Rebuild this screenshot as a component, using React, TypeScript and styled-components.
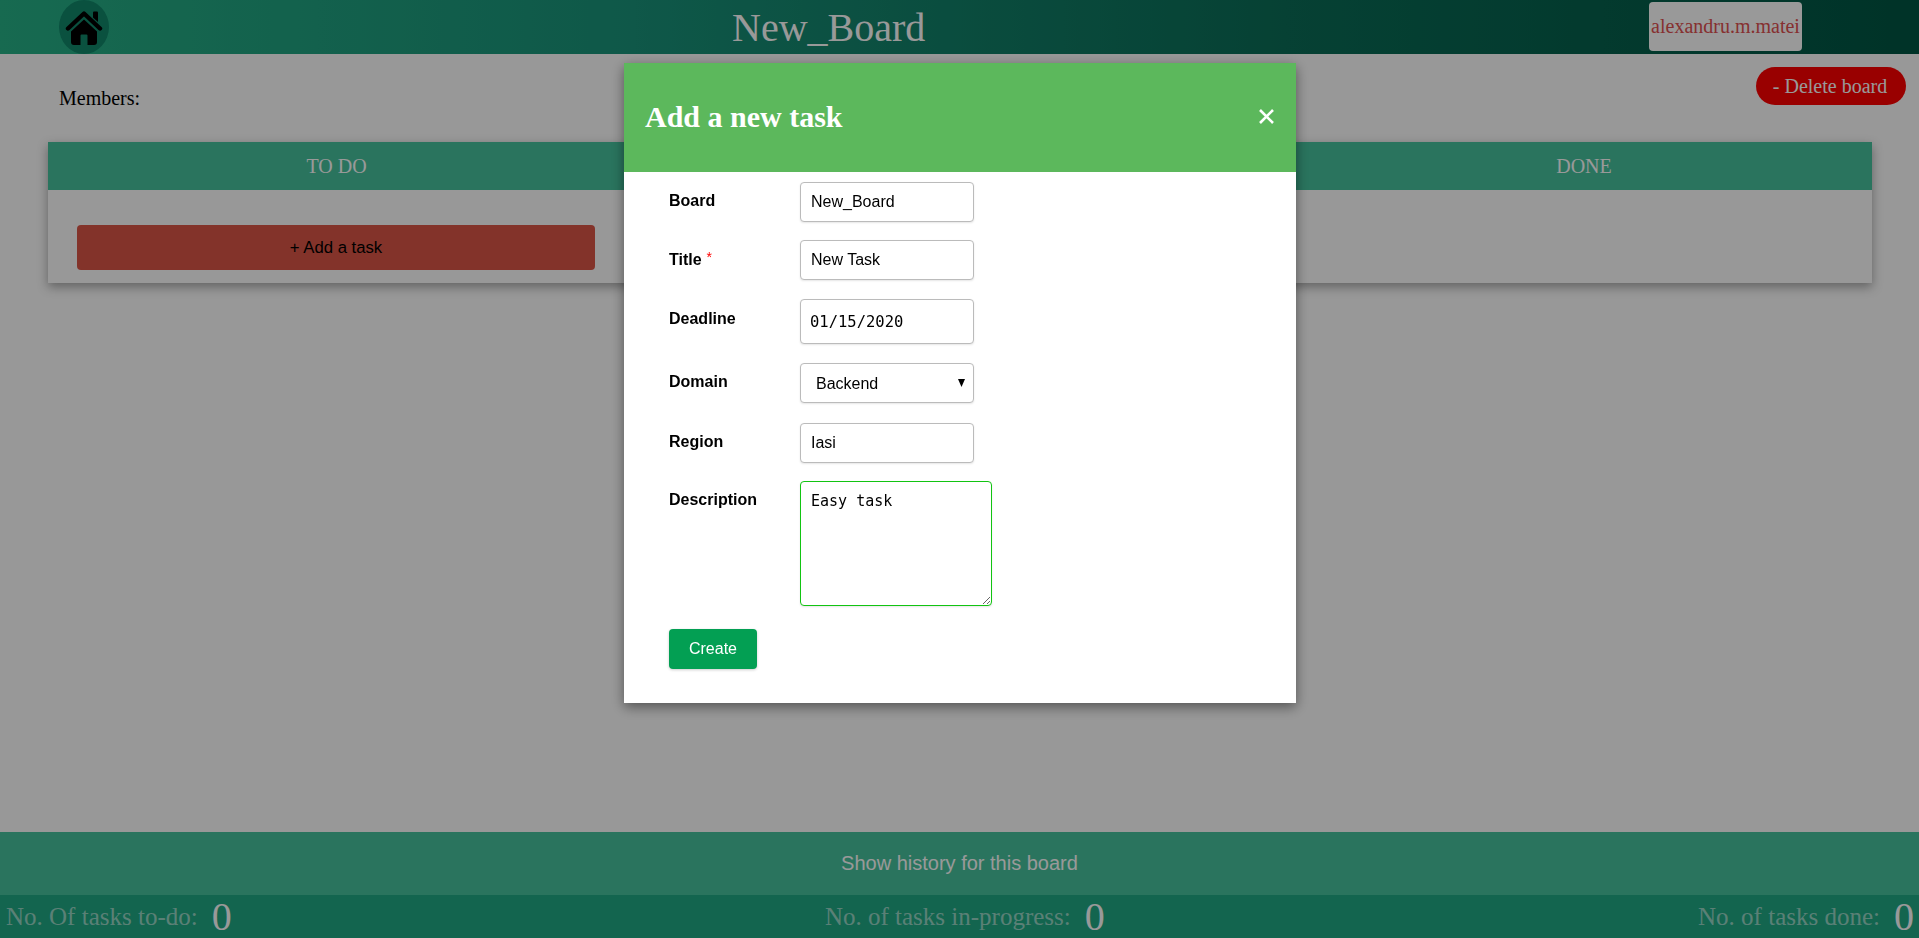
import React from "react";
import styled, { createGlobalStyle } from "styled-components";

const GlobalStyle = createGlobalStyle`
  html, body {
    margin: 0;
    padding: 0;
    background: #fff;
  }
  * {
    box-sizing: border-box;
  }
`;

/* Page */
/* ************************************************************************** */
const Page = styled.div`
  display: flex;
  flex-direction: column;
  height: 100vh;
  overflow: hidden;
  font-family: "Liberation Serif", serif;
  background: #fdfdfd;
`;

const Header = styled.header`
  flex: none;
  display: grid;
  grid-template-columns: 732px 1fr auto;
  align-items: center;
  height: 54px;
  padding-right: 117px;
  background: linear-gradient(to right, #27b186 0%, #19937a 33%, #0a6d57 67%, #005543 100%);
`;

const HomeCell = styled.div`
  padding-left: 59px;
`;

const HomeLink = styled.a`
  display: flex;
  align-items: center;
  justify-content: center;
  width: 50px;
  height: 54px;
  border-radius: 50%;
  background: #11876a;
  color: #000;
`;

const HomeIcon = styled.svg`
  width: 38px;
  height: 36px;
  fill: #000;
`;

const BoardTitle = styled.h1`
  margin: 0;
  font-size: 40px;
  font-weight: 400;
  color: #fff;
`;

const UserButton = styled.button`
  width: 153px;
  height: 49px;
  margin-bottom: 1px;
  padding: 0;
  border: 0;
  border-radius: 4px;
  background: #fff;
  color: #e05050;
  font-family: inherit;
  font-size: 20px;
`;

const Toolbar = styled.div`
  flex: none;
  display: flex;
  justify-content: space-between;
  height: 88px;
  padding: 13px 13px 0 59px;
`;

const Members = styled.div`
  padding-top: 20px;
  font-size: 20px;
  color: #000;
`;

const DeleteButton = styled.button`
  width: 150px;
  height: 38px;
  padding: 0 2px 0 0;
  border: 0;
  border-radius: 19px;
  background: #f00;
  color: #fff;
  font-family: inherit;
  font-size: 20px;
`;

const Columns = styled.section`
  flex: none;
  display: grid;
  grid-template-columns: 577px 1fr 576px;
  height: 141px;
  margin: 0 47px 0 48px;
  box-shadow: 0 4px 10px rgba(0, 0, 0, 0.35);
`;

const Column = styled.div`
  display: flex;
  flex-direction: column;
`;

const ColumnTitle = styled.div`
  display: flex;
  align-items: center;
  justify-content: center;
  height: 48px;
  background: #46c29d;
  color: #fff;
  font-size: 20px;
`;

const ColumnBody = styled.div`
  padding: 35px 30px 0 29px;
`;

const AddTask = styled.button`
  display: block;
  width: 100%;
  height: 45px;
  border: 0;
  border-radius: 4px;
  background: #da5546;
  color: #000;
  font-family: "Liberation Sans", sans-serif;
  font-size: 16.7px;
`;

const Spacer = styled.div`
  flex: 1;
`;

const HistoryButton = styled.button`
  flex: none;
  height: 63px;
  border: 0;
  background: #46c29d;
  color: #fff;
  font-family: "Liberation Sans", sans-serif;
  font-size: 20px;
`;

const Totals = styled.footer`
  flex: none;
  display: flex;
  justify-content: space-between;
  align-items: center;
  height: 43px;
  padding: 0 5px 0 6px;
  background: #20a884;
`;

const Total = styled.div`
  display: flex;
  align-items: center;
  gap: 14px;
`;

const TotalLabel = styled.span`
  font-size: 25px;
  color: rgba(255, 255, 255, 0.55);
`;

const TotalValue = styled.span`
  font-size: 40px;
  line-height: 43px;
  color: #fff;
`;

/* Modal */
/* ************************************************************************** */
const Backdrop = styled.div`
  position: fixed;
  inset: 0;
  background: rgba(0, 0, 0, 0.4);
`;

const Modal = styled.div`
  position: absolute;
  top: 63px;
  left: 624px;
  width: 672px;
  height: 640px;
  background: #fff;
  box-shadow: 0 4px 12px rgba(0, 0, 0, 0.45);
`;

const ModalHeader = styled.div`
  display: flex;
  align-items: center;
  justify-content: space-between;
  height: 109px;
  padding: 0 21px 2px;
  background: #5cb85c;
  color: #fff;
`;

const ModalTitle = styled.h2`
  margin: 0;
  font-size: 30px;
  font-weight: 700;
`;

const CloseIcon = styled.svg`
  width: 17px;
  height: 15px;
  stroke: #fff;
  stroke-width: 2.6;
`;

const Form = styled.form`
  display: flex;
  flex-direction: column;
  align-items: flex-start;
  padding: 10px 45px 0;
  font-family: "Liberation Sans", sans-serif;
`;

const Row = styled.div<{ $gap: number }>`
  display: grid;
  grid-template-columns: 131px auto;
  margin-bottom: ${(p) => p.$gap}px;
`;

const Label = styled.label<{ $top?: number }>`
  padding-top: ${(p) => p.$top ?? 10}px;
  font-size: 16px;
  line-height: 18px;
  font-weight: 700;
  color: #000;
`;

const Required = styled.span`
  position: relative;
  top: -3px;
  margin-left: 5px;
  font-size: 14px;
  font-weight: 400;
  color: #f00;
`;

const Input = styled.input<{ $height?: number }>`
  display: block;
  width: 174px;
  height: ${(p) => p.$height ?? 40}px;
  padding: 0 10px;
  border: 1px solid #bbb;
  border-radius: 4px;
  background: #fff;
  color: #000;
  font-family: "Liberation Sans", sans-serif;
  font-size: 16px;
  box-shadow: 0 1px 2px rgba(0, 0, 0, 0.1);
  outline: none;
`;

const DateInput = styled(Input)`
  padding: 0 9px;
  font-family: "DejaVu Sans Mono", monospace;
  font-size: 15.5px;
`;

const SelectWrap = styled.div`
  position: relative;
  width: 174px;
`;

const Select = styled.select`
  display: block;
  width: 100%;
  height: 40px;
  padding: 0 0 0 15px;
  appearance: none;
  border: 1px solid #bbb;
  border-radius: 4px;
  background: #fff;
  color: #000;
  font-family: "Liberation Sans", sans-serif;
  font-size: 16px;
  box-shadow: 0 1px 2px rgba(0, 0, 0, 0.1);
  outline: none;
`;

const SelectArrow = styled.svg`
  position: absolute;
  top: 16px;
  right: 9px;
  width: 7px;
  height: 8px;
  pointer-events: none;
`;

const Description = styled.textarea`
  display: block;
  width: 192px;
  height: 125px;
  padding: 10px 10px;
  border: 1px solid #12c412;
  border-radius: 4px;
  color: #000;
  font-family: "DejaVu Sans Mono", monospace;
  font-size: 15px;
  line-height: 18px;
  box-shadow: 0 1px 2px rgba(0, 0, 0, 0.1);
  outline: none;
`;

const CreateButton = styled.button`
  width: 88px;
  height: 40px;
  padding: 0;
  border: 0;
  border-radius: 4px;
  background: #039f53;
  color: #fff;
  font-family: "Liberation Sans", sans-serif;
  font-size: 16px;
  box-shadow: 0 1px 3px rgba(0, 0, 0, 0.2);
`;

export default function App() {
  return (
    <>
      <GlobalStyle />
      <Page>
        <Header>
          <HomeCell>
            <HomeLink>
              <HomeIcon viewBox="0 0 38 36">
                <path d="M28 3.5 a1 1 0 0 1 1 -1 h3 a1 1 0 0 1 1 1 V13 l-5 -4.5 Z" />
                <path d="M3 19.5 L19 4.5 L35 19.5" fill="none" stroke="#000" strokeWidth="4.4" strokeLinecap="round" strokeLinejoin="round" />
                <path fillRule="evenodd" d="M19 10.5 L32 22.5 V33 a3 3 0 0 1 -3 3 H9 a3 3 0 0 1 -3 -3 V22.5 Z M15.5 36 H22.5 V26.5 a1 1 0 0 0 -1 -1 H16.5 a1 1 0 0 0 -1 1 Z" />
              </HomeIcon>
            </HomeLink>
          </HomeCell>
          <BoardTitle>New_Board</BoardTitle>
          <UserButton>alexandru.m.matei</UserButton>
        </Header>
        <Toolbar>
          <Members>Members:</Members>
          <DeleteButton>- Delete board</DeleteButton>
        </Toolbar>
        <Columns>
          <Column>
            <ColumnTitle>TO DO</ColumnTitle>
            <ColumnBody>
              <AddTask>+ Add a task</AddTask>
            </ColumnBody>
          </Column>
          <Column>
            <ColumnTitle />
          </Column>
          <Column>
            <ColumnTitle>DONE</ColumnTitle>
          </Column>
        </Columns>
        <Spacer />
        <HistoryButton>Show history for this board</HistoryButton>
        <Totals>
          <Total>
            <TotalLabel>No. Of tasks to-do:</TotalLabel>
            <TotalValue>0</TotalValue>
          </Total>
          <Total>
            <TotalLabel>No. of tasks in-progress:</TotalLabel>
            <TotalValue>0</TotalValue>
          </Total>
          <Total>
            <TotalLabel>No. of tasks done:</TotalLabel>
            <TotalValue>0</TotalValue>
          </Total>
        </Totals>
      </Page>
      <Backdrop>
        <Modal>
          <ModalHeader>
            <ModalTitle>Add a new task</ModalTitle>
            <CloseIcon viewBox="0 0 17 15">
              <path d="M2 1 L15 14 M15 1 L2 14" />
            </CloseIcon>
          </ModalHeader>
          <Form>
            <Row $gap={18}>
              <Label>Board</Label>
              <Input defaultValue="New_Board" />
            </Row>
            <Row $gap={19}>
              <Label $top={11}>Title<Required>*</Required></Label>
              <Input defaultValue="New Task" />
            </Row>
            <Row $gap={19}>
              <Label $top={11}>Deadline</Label>
              <DateInput $height={45} defaultValue="01/15/2020" />
            </Row>
            <Row $gap={20}>
              <Label>Domain</Label>
              <SelectWrap>
                <Select defaultValue="Backend">
                  <option>Backend</option>
                  <option>Frontend</option>
                </Select>
                <SelectArrow viewBox="0 0 7 8">
                  <path d="M0 0 H7 L3.5 8 Z" />
                </SelectArrow>
              </SelectWrap>
            </Row>
            <Row $gap={18}>
              <Label>Region</Label>
              <Input defaultValue="Iasi" />
            </Row>
            <Row $gap={23}>
              <Label>Description</Label>
              <Description defaultValue="Easy task" />
            </Row>
            <CreateButton type="button">Create</CreateButton>
          </Form>
        </Modal>
      </Backdrop>
    </>
  );
}
